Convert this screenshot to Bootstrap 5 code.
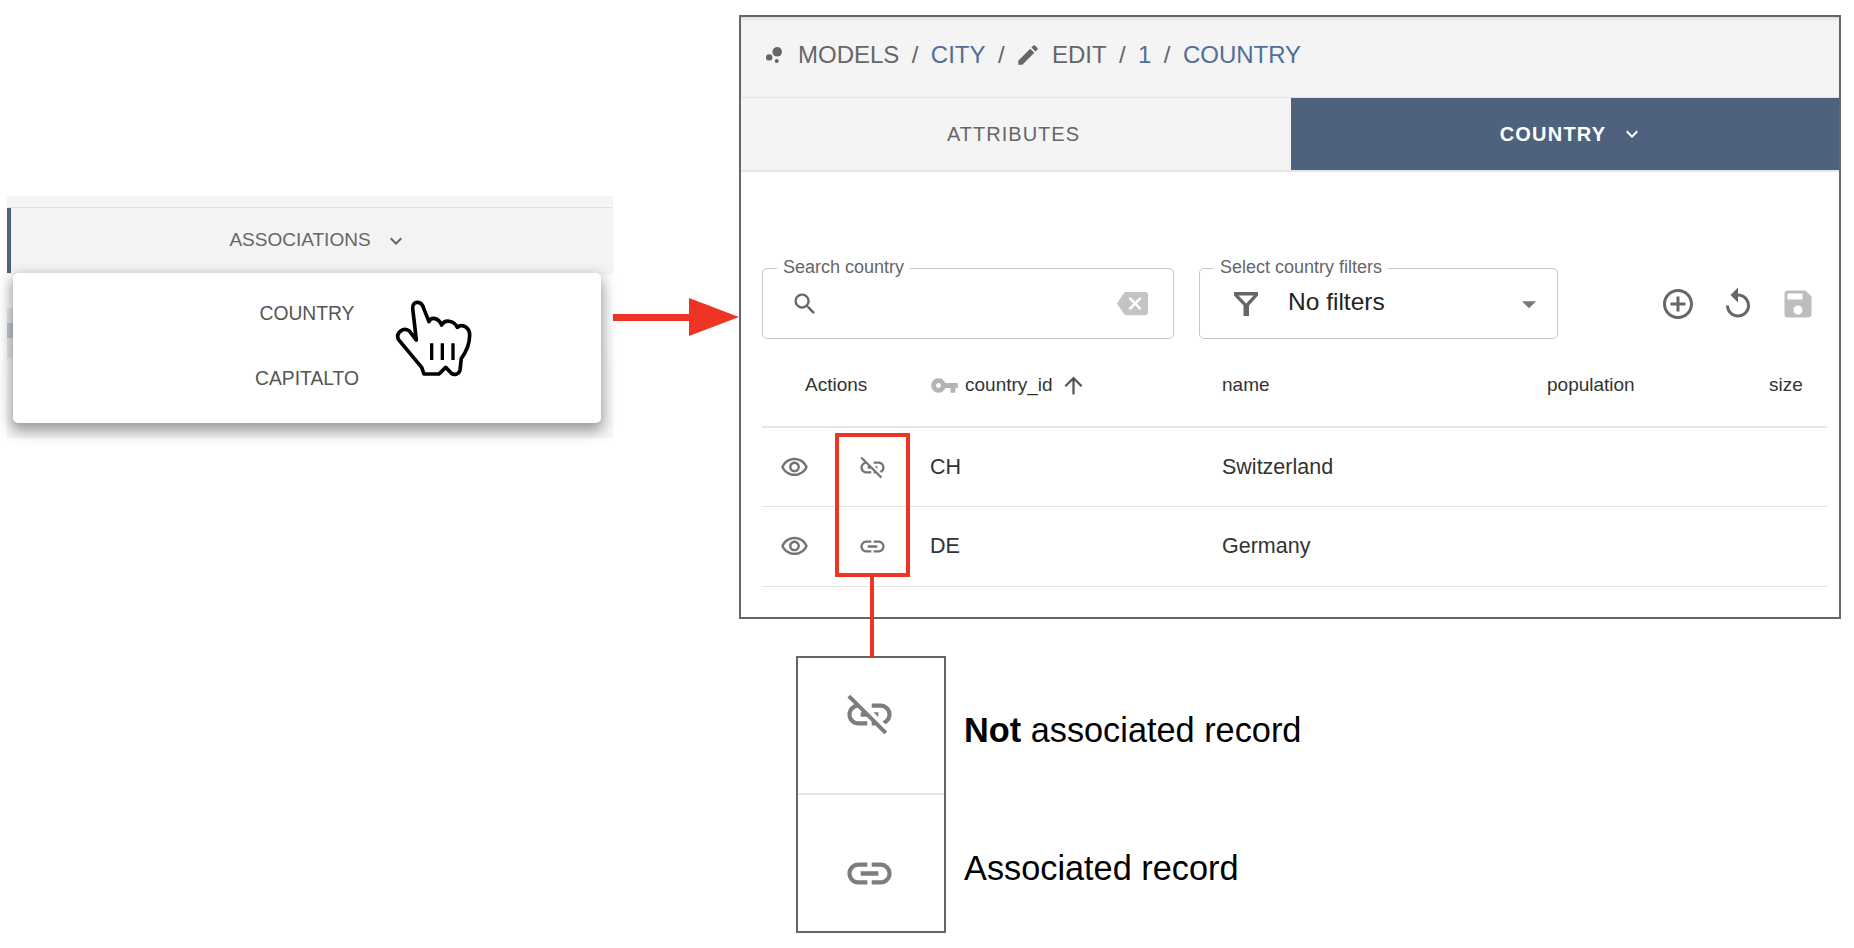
<!doctype html>
<html lang="en">
<head>
<meta charset="utf-8">
<title>Associations</title>
<link href="https://cdn.jsdelivr.net/npm/bootstrap@5.3.0/dist/css/bootstrap.min.css" rel="stylesheet">
<style>
html,body{height:100%}
body{background:#fff;overflow:hidden;font-family:"Liberation Sans",Arial,sans-serif;color:#666}
svg{fill:currentColor;display:block;flex:none}
.stage{height:948px;padding-top:15px;padding-left:7px}
.left-shot{width:606px;height:242px;margin-top:181px;background:linear-gradient(#f5f5f5 0,#f5f5f5 77px,#fff 77px,#f7f7f7 100%);position:relative;flex:none}
.top-sliver{height:12px;border-bottom:1px solid #e2e2e2}
.assoc-tab{height:65px;border-left:4px solid #4f627d;padding-left:13px;background:#f4f4f4;font-size:19px;box-shadow:0 1px 2px rgba(0,0,0,.08);gap:13px}
.behind-strip{position:absolute;left:0;top:112px;width:6px;height:50px;background:linear-gradient(#ececec 0,#ececec 30%,#c3ccd8 30%,#c3ccd8 60%,#ececec 60%)}
.assoc-menu{position:absolute;left:6px;top:77px;width:588px;height:150px;background:#fff;border-radius:5px;box-shadow:0 6px 14px 2px rgba(0,0,0,.38);font-size:19.3px;color:#555;padding-top:9px}
.assoc-menu div{height:65px}
.hand{position:absolute;left:366px;top:7px;fill:#fff}
.arrow-col{width:126px;height:38px;margin-top:283px;flex:none}
.arrow-shaft{width:76px;height:7px;background:#ee3524;flex:none}
.arrow-head{width:0;height:0;flex:none;border-top:19px solid transparent;border-bottom:19px solid transparent;border-left:50px solid #ee3524}
.right-col{width:1102px;flex:none}
.frame{height:604px;border:2px solid #666;background:#fff;position:relative}
.crumbs{height:81px;background:#f4f4f4;padding:0 0 5px 21px;font-size:24px;border-bottom:1px solid #e4e4e4;box-shadow:inset 0 4px 4px -3px rgba(0,0,0,.15)}
.crumbs .sep{margin:0 12.4px}
.crumbs .blue{color:#4f6f98}
.crumb-bubble{margin-right:12px}
.crumb-pencil{margin:0 11px 0 -2px}
.tab-row{height:74px;border-bottom:2px solid #e6e6e6}
.tab-off{width:550px;background:#f4f4f4;font-size:20px;letter-spacing:1px;padding-right:5px}
.tab-on{background:#4f627d;color:#fff;font-size:20px;font-weight:700;letter-spacing:1.2px;padding-left:14px;gap:14px}
.filter-row{padding:96px 12px 0 21px;height:163px}
.outlined{position:relative;height:71px;border:1.5px solid #c6c6c6;border-radius:5px;flex:none}
.outlined>.leg{position:absolute;top:-13px;left:14px;background:#fff;padding:0 6px;font-size:18px;line-height:22px;color:#666}
.box-search{width:412px;padding:0 25px 0 28px}
.box-filter{width:359px;margin-left:25px;padding:0 11px 2px 34px;color:#222;font-size:24.5px}
.box-filter .txt{margin-left:30px}
.box-filter svg{margin-top:2px}
.tool-row{margin-left:auto;gap:24px;padding-right:11px;height:71px}
.table-wrap{margin:0 12px 0 21px;position:relative}
.data-tbl{table-layout:fixed;width:1065px;margin:0;--bs-table-bg:transparent}
.data-tbl th{height:92px;font-weight:400;font-size:19px;color:#333;vertical-align:middle;padding:10px 0 0 10px;border-bottom:2px solid #e6e6e6}
.data-tbl td{height:79.5px;font-size:21.5px;color:#333;vertical-align:middle;padding:0 0 0 10px;border-bottom:1.5px solid #e2e2e2}
.data-tbl td.acts{padding:0}
.acts-in{padding-left:18px;gap:49px;color:#747474}
.th-key{color:#b4b4b4;margin-right:6px}
.th-arrow{color:#555;margin-left:7px}
.red-box{position:absolute;left:73px;top:98px;width:75px;height:144px;border:4px solid #ee3524;pointer-events:none}
.red-line{position:absolute;left:31px;top:100%;width:4px;height:84px;background:#ee3524}
.legend-row{margin-left:57px;margin-top:37px}
.legend-box{width:150px;height:277px;border:2px solid #666;color:#7d7d7d}
.legend-box>div{height:137px;padding-right:4px}
.legend-box>div:first-child{border-bottom:2px solid #e6e6e6;padding-bottom:22px}
.legend-box>div:last-child{padding-top:19px}
.legend-text{margin-left:18px;padding-top:6px;font-size:34.3px;color:#000}
.legend-text div{height:138px}
</style>
</head>
<body>
<div class="stage d-flex align-items-start">
  <div class="left-shot">
    <div class="top-sliver"></div>
    <div class="assoc-tab d-flex align-items-center justify-content-center">
      <span>ASSOCIATIONS</span>
      <svg width="24" height="24" viewBox="0 0 24 24"><path d="M16.59 8.59 12 13.17 7.41 8.59 6 10l6 6 6-6z"/></svg>
    </div>
    <div class="behind-strip"></div>
    <div class="assoc-menu">
      <div class="d-flex align-items-center justify-content-center">COUNTRY</div>
      <div class="d-flex align-items-center justify-content-center">CAPITALTO</div>
      <svg class="hand" width="120" height="110" viewBox="0 0 360 330"><path d="M101 85C100 62 127 60 134 85L150 125C156 110 178 112 188 135C196 118 224 120 235 142C248 130 272 140 272 165C272 190 262 215 247 235L243 270C240 285 225 285 217 280L200 262L180 282L135 282L128 262L58 178C50 160 72 140 90 152L112 180Z" stroke="#000" stroke-width="11" stroke-linejoin="round"/><path d="M158 190V240M190 190V240M222 190V240" stroke="#000" stroke-width="10" fill="none"/></svg>
    </div>
  </div>
  <div class="arrow-col d-flex align-items-center">
    <div class="arrow-shaft"></div>
    <div class="arrow-head"></div>
  </div>
  <div class="right-col">
    <div class="frame">
      <div class="crumbs d-flex align-items-center">
        <svg class="crumb-bubble" width="24" height="24" viewBox="0 0 24 24"><circle cx="7.2" cy="14.4" r="3.2"/><circle cx="14.8" cy="18" r="2"/><circle cx="15.2" cy="8.8" r="4.8"/></svg>
        <span>MODELS</span><span class="sep">/</span><span class="blue">CITY</span><span class="sep">/</span>
        <svg class="crumb-pencil" width="26" height="26" viewBox="0 0 24 24"><path d="M3 17.25V21h3.75L17.81 9.94l-3.75-3.75L3 17.25zM20.71 7.04c.39-.39.39-1.02 0-1.41l-2.34-2.34a.9959.9959 0 0 0-1.41 0l-1.83 1.83 3.75 3.75 1.83-1.83z"/></svg>
        <span>EDIT</span><span class="sep">/</span><span class="blue">1</span><span class="sep">/</span><span class="blue">COUNTRY</span>
      </div>
      <div class="tab-row d-flex">
        <div class="tab-off d-flex align-items-center justify-content-center">ATTRIBUTES</div>
        <div class="tab-on flex-grow-1 d-flex align-items-center justify-content-center">
          <span>COUNTRY</span>
          <svg width="24" height="24" viewBox="0 0 24 24"><path d="M16.59 8.59 12 13.17 7.41 8.59 6 10l6 6 6-6z"/></svg>
        </div>
      </div>
      <div class="filter-row d-flex align-items-start">
        <div class="outlined box-search d-flex align-items-center justify-content-between">
          <span class="leg">Search country</span>
          <svg width="28" height="28" viewBox="0 0 24 24"><path d="M15.5 14h-.79l-.28-.27C15.41 12.59 16 11.11 16 9.5 16 5.91 13.09 3 9.5 3S3 5.91 3 9.5 5.91 16 9.5 16c1.61 0 3.09-.59 4.23-1.57l.27.28v.79l5 4.99L20.49 19l-4.99-5zm-6 0C7.01 14 5 11.99 5 9.5S7.01 5 9.5 5 14 7.01 14 9.5 11.99 14 9.5 14z"/></svg>
          <svg width="31" height="31" viewBox="0 0 24 24" style="color:#c4c4c4"><path d="M22 3H7c-.69 0-1.23.35-1.59.88L0 12l5.41 8.11c.36.53.9.89 1.59.89h15c1.1 0 2-.9 2-2V5c0-1.1-.9-2-2-2zm-3 12.59L17.59 17 14 13.41 10.41 17 9 15.59 12.59 12 9 8.41 10.41 7 14 10.59 17.59 7 19 8.41 15.41 12 19 15.59z"/></svg>
        </div>
        <div class="outlined box-filter d-flex align-items-center">
          <span class="leg">Select country filters</span>
          <svg width="24" height="24" viewBox="0 0 24 24" style="color:#666"><path fill-rule="evenodd" d="M0 0H24V3.5L15 13.5V24H9.5V13.5L0 3.5ZM4.5 3.5H19.5L12.2 11.5Z"/></svg>
          <span class="txt flex-grow-1">No filters</span>
          <svg width="34" height="34" viewBox="0 0 24 24" style="color:#777"><path d="M7 10l5 5 5-5z"/></svg>
        </div>
        <div class="tool-row d-flex align-items-center">
          <svg width="36" height="36" viewBox="0 0 24 24"><path d="M13 7h-2v4H7v2h4v4h2v-4h4v-2h-4V7zm-1-5C6.48 2 2 6.48 2 12s4.48 10 10 10 10-4.48 10-10S17.52 2 12 2zm0 18c-4.41 0-8-3.59-8-8s3.59-8 8-8 8 3.59 8 8-3.59 8-8 8z"/></svg>
          <svg width="36" height="36" viewBox="0 0 24 24"><path d="M12 5V1L7 6l5 5V7c3.31 0 6 2.69 6 6s-2.69 6-6 6-6-2.69-6-6H4c0 4.42 3.58 8 8 8s8-3.58 8-8-3.58-8-8-8z"/></svg>
          <svg width="36" height="36" viewBox="0 0 24 24" style="color:#bdbdbd"><path d="M17 3H5c-1.11 0-2 .9-2 2v14c0 1.1.89 2 2 2h14c1.1 0 2-.9 2-2V7l-4-4zm-5 16c-1.66 0-3-1.34-3-3s1.34-3 3-3 3 1.34 3 3-1.34 3-3 3zm3-10H5V5h10v4z"/></svg>
        </div>
      </div>
      <div class="table-wrap">
        <table class="table data-tbl">
          <colgroup><col style="width:158px"><col style="width:292px"><col style="width:325px"><col style="width:222px"><col style="width:68px"></colgroup>
          <thead><tr>
            <th style="padding-left:43px">Actions</th>
            <th><div class="d-flex align-items-center">
              <svg class="th-key" width="29" height="29" viewBox="0 0 24 24"><path d="M12.65 10C11.83 7.67 9.61 6 7 6c-3.31 0-6 2.69-6 6s2.69 6 6 6c2.61 0 4.83-1.67 5.65-4H17v4h4v-4h2v-4H12.65zM7 14c-1.1 0-2-.9-2-2s.9-2 2-2 2 .9 2 2-.9 2-2 2z"/></svg>
              <span>country_id</span>
              <svg class="th-arrow" width="27" height="27" viewBox="0 0 24 24"><path d="M4 12l1.41 1.41L11 7.83V20h2V7.83l5.58 5.59L20 12l-8-8-8 8z"/></svg>
            </div></th>
            <th>name</th><th>population</th><th>size</th>
          </tr></thead>
          <tbody>
            <tr>
              <td class="acts"><div class="acts-in d-flex align-items-center">
                <svg width="29" height="29" viewBox="0 0 24 24"><path d="M12 6c3.79 0 7.17 2.13 8.82 5.5C19.17 14.87 15.79 17 12 17s-7.17-2.13-8.82-5.5C4.83 8.13 8.21 6 12 6m0-2C7 4 2.73 7.11 1 11.5 2.73 15.89 7 19 12 19s9.27-3.11 11-7.5C21.27 7.11 17 4 12 4zm0 5c1.38 0 2.5 1.12 2.5 2.5S13.38 14 12 14s-2.5-1.12-2.5-2.5S10.62 9 12 9m0-2c-2.48 0-4.5 2.02-4.5 4.5S9.52 16 12 16s4.5-2.02 4.5-4.5S14.48 7 12 7z"/></svg>
                <svg width="29" height="29" viewBox="0 0 24 24"><path d="M17 7h-4v1.9h4c1.71 0 3.1 1.39 3.1 3.1 0 1.43-.98 2.63-2.31 2.98l1.46 1.46C20.88 15.61 22 13.95 22 12c0-2.76-2.24-5-5-5zm-1 4h-2.19l2 2H16zM2 4.27l3.11 3.11C3.29 8.12 2 9.91 2 12c0 2.76 2.24 5 5 5h4v-1.9H7c-1.71 0-3.1-1.39-3.1-3.1 0-1.59 1.21-2.9 2.76-3.07L8.73 11H8v2h2.73L13 15.27V17h1.73l4.01 4L20 19.74 3.27 3 2 4.27z"/></svg>
              </div></td>
              <td>CH</td><td>Switzerland</td><td></td><td></td>
            </tr>
            <tr>
              <td class="acts"><div class="acts-in d-flex align-items-center">
                <svg width="29" height="29" viewBox="0 0 24 24"><path d="M12 6c3.79 0 7.17 2.13 8.82 5.5C19.17 14.87 15.79 17 12 17s-7.17-2.13-8.82-5.5C4.83 8.13 8.21 6 12 6m0-2C7 4 2.73 7.11 1 11.5 2.73 15.89 7 19 12 19s9.27-3.11 11-7.5C21.27 7.11 17 4 12 4zm0 5c1.38 0 2.5 1.12 2.5 2.5S13.38 14 12 14s-2.5-1.12-2.5-2.5S10.62 9 12 9m0-2c-2.48 0-4.5 2.02-4.5 4.5S9.52 16 12 16s4.5-2.02 4.5-4.5S14.48 7 12 7z"/></svg>
                <svg width="29" height="29" viewBox="0 0 24 24"><path d="M3.9 12c0-1.71 1.39-3.1 3.1-3.1h4V7H7c-2.76 0-5 2.24-5 5s2.24 5 5 5h4v-1.9H7c-1.71 0-3.1-1.39-3.1-3.1zM8 13h8v-2H8v2zm9-6h-4v1.9h4c1.71 0 3.1 1.39 3.1 3.1s-1.39 3.1-3.1 3.1h-4V17h4c2.76 0 5-2.24 5-5s-2.24-5-5-5z"/></svg>
              </div></td>
              <td>DE</td><td>Germany</td><td></td><td></td>
            </tr>
          </tbody>
        </table>
        <div class="red-box"><div class="red-line"></div></div>
      </div>
    </div>
    <div class="legend-row d-flex">
      <div class="legend-box">
        <div class="d-flex align-items-center justify-content-center">
          <svg width="53" height="53" viewBox="0 0 24 24"><path d="M17 7h-4v1.9h4c1.71 0 3.1 1.39 3.1 3.1 0 1.43-.98 2.63-2.31 2.98l1.46 1.46C20.88 15.61 22 13.95 22 12c0-2.76-2.24-5-5-5zm-1 4h-2.19l2 2H16zM2 4.27l3.11 3.11C3.29 8.12 2 9.91 2 12c0 2.76 2.24 5 5 5h4v-1.9H7c-1.71 0-3.1-1.39-3.1-3.1 0-1.59 1.21-2.9 2.76-3.07L8.73 11H8v2h2.73L13 15.27V17h1.73l4.01 4L20 19.74 3.27 3 2 4.27z"/></svg>
        </div>
        <div class="d-flex align-items-center justify-content-center">
          <svg width="53" height="53" viewBox="0 0 24 24"><path d="M3.9 12c0-1.71 1.39-3.1 3.1-3.1h4V7H7c-2.76 0-5 2.24-5 5s2.24 5 5 5h4v-1.9H7c-1.71 0-3.1-1.39-3.1-3.1zM8 13h8v-2H8v2zm9-6h-4v1.9h4c1.71 0 3.1 1.39 3.1 3.1s-1.39 3.1-3.1 3.1h-4V17h4c2.76 0 5-2.24 5-5s-2.24-5-5-5z"/></svg>
        </div>
      </div>
      <div class="legend-text">
        <div class="d-flex align-items-center"><span><b>Not</b> associated record</span></div>
        <div class="d-flex align-items-center"><span>Associated record</span></div>
      </div>
    </div>
  </div>
</div>
<script src="https://cdn.jsdelivr.net/npm/bootstrap@5.3.0/dist/js/bootstrap.bundle.min.js"></script>
</body>
</html>
